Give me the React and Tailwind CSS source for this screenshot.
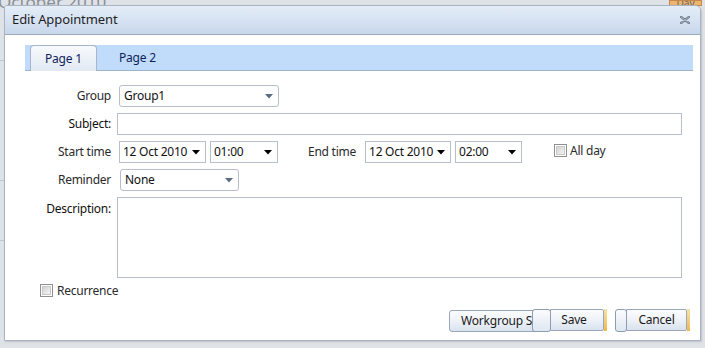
import React from "react";

const font = { fontFamily: '"Noto Sans", "Open Sans", sans-serif' };

function Arrow({ color = "#000" }) {
  return (
    <svg width="8" height="5" viewBox="0 0 8 5" className="shrink-0">
      <path d="M0 0 L8 0 L4 4.5 Z" fill={color} />
    </svg>
  );
}

function Checkbox() {
  return (
    <div className="w-[13px] h-[13px] border border-[#8f8f8f] bg-white p-[1px] shrink-0">
      <div className="w-full h-full bg-gradient-to-br from-[#d3d3d3] to-[#f4f4f4] border border-[#c8c8c8]" />
    </div>
  );
}

function Label({ children, dark }) {
  return (
    <div className={`w-[86px] shrink-0 text-right text-[12px] tracking-[-0.25px] leading-[16px] ${dark ? "text-[#111]" : "text-[#2a2a2a]"}`}>
      {children}
    </div>
  );
}

function DateSelect({ value, w, arrowColor = "#000", rounded = false, left = 3 }) {
  return (
    <div
      className={`h-[22px] border border-[#b6bfcb] bg-white flex items-center justify-between pr-[5px] text-[12px] tracking-[-0.25px] leading-[16px] text-[#111] ${rounded ? "rounded-[3px]" : ""}`}
      style={{ width: w, paddingLeft: left }}
    >
      <span>{value}</span>
      <Arrow color={arrowColor} />
    </div>
  );
}

export default function App() {
  return (
    <div className="w-[705px] h-[348px] relative overflow-hidden bg-[#dfe3e8]" style={font}>
      {/* background calendar */}
      <div className="absolute left-[-2px] top-[-11px] text-[17px] text-[#8a8f96]">October 2010</div>
      <div className="absolute left-[669px] top-0 w-[33px] h-[6px] bg-[#f0b46e] border border-[#c4894a] text-[10px] leading-[4px] text-center text-[#666] overflow-hidden">Day</div>
      <div className="absolute left-0 top-[60px] w-[4px] h-px bg-[#c3c8cf]" />
      <div className="absolute left-0 top-[180px] w-[4px] h-px bg-[#c3c8cf]" />
      <div className="absolute left-0 top-[240px] w-[4px] h-px bg-[#c3c8cf]" />

      {/* dialog */}
      <div className="absolute left-[4px] top-[5px] w-[697px] h-[336px] bg-white border border-[#a9b4c2] rounded-tr-[6px] rounded-tl-[3px] flex flex-col overflow-hidden shadow-[1px_1px_2px_rgba(0,0,0,0.15)]">
        {/* title bar */}
        <div className="h-[29px] shrink-0 bg-gradient-to-b from-[#e4edf8] via-[#d7e3f3] to-[#c8d7eb] border-b border-[#98a9c0] flex items-center justify-between pl-[7px] pr-[10px]">
          <span className="text-[13px] tracking-[-0.1px] text-[#1e1e1e]">Edit Appointment</span>
          <svg width="10" height="8" viewBox="0 0 10 8">
            <path d="M1 0.8 L9 7.2 M9 0.8 L1 7.2" stroke="#6f7a8a" strokeWidth="2.3" strokeLinecap="round" />
            <path d="M1 0.8 L9 7.2 M9 0.8 L1 7.2" stroke="#c5ccd6" strokeWidth="0.7" strokeLinecap="round" />
          </svg>
        </div>

        <div className="flex-1 flex flex-col pl-[20px] pr-[8px] pt-[10px]">
          {/* tabs */}
          <div className="h-[26px] w-[668px] bg-[#c1dcfa] border-b border-[#9fb4cc] flex items-end pl-[5px]">
            <div className="h-[26px] w-[67px] -mb-px bg-gradient-to-b from-[#f7f9fc] to-[#e1e9f4] border border-[#a6b5c9] border-b-0 rounded-t-[4px] flex items-center justify-center text-[12px] tracking-[-0.2px] text-[#0e1e5a]">
              Page 1
            </div>
            <div className="h-[25px] ml-[22px] flex items-center text-[12px] tracking-[-0.2px] text-[#0e1e5a]">Page 2</div>
          </div>

          {/* form */}
          <div className="flex flex-col mt-[14px] gap-[6px]">
            <div className="flex items-center h-[22px]">
              <Label>Group</Label>
              <div className="ml-[8px]">
                <DateSelect value="Group1" w={160} arrowColor="#5b6b84" rounded left={4} />
              </div>
            </div>
            <div className="flex items-center h-[22px]">
              <Label dark>Subject:</Label>
              <div className="ml-[6px] w-[565px] h-[22px] border border-[#b6bfcb] bg-white" />
            </div>
            <div className="flex items-center h-[22px]">
              <Label>Start time</Label>
              <div className="ml-[8px] flex gap-[4px]">
                <DateSelect value="12 Oct 2010" w={87} />
                <DateSelect value="01:00" w={68} />
              </div>
              <div className="ml-[30px] text-[12px] tracking-[-0.25px] leading-[16px] text-[#2a2a2a]">End time</div>
              <div className="ml-[9px] flex gap-[4px]">
                <DateSelect value="12 Oct 2010" w={86} />
                <DateSelect value="02:00" w={67} />
              </div>
              <div className="ml-[32px] flex items-center gap-[3px] -mt-[3px]">
                <Checkbox />
                <span className="text-[12px] tracking-[-0.25px] leading-[16px] text-[#2a2a2a]">All day</span>
              </div>
            </div>
            <div className="flex items-center h-[22px]">
              <Label>Reminder</Label>
              <div className="ml-[9px]">
                <DateSelect value="None" w={119} arrowColor="#5b6b84" rounded left={4} />
              </div>
            </div>
            <div className="flex items-start h-[81px]">
              <div className="pt-[4px]">
                <Label dark>Description:</Label>
              </div>
              <div className="ml-[6px] w-[565px] h-[81px] border border-[#b6bfcb] bg-white" />
            </div>
            <div className="flex items-center gap-[4px] pl-[15px] h-[13px]">
              <Checkbox />
              <span className="text-[12px] tracking-[-0.25px] leading-[16px] text-[#2a2a2a]">Recurrence</span>
            </div>
          </div>

          {/* buttons */}
          <div className="flex justify-end items-center mt-[12px] pr-[2px]">
            <div className="h-[22px] w-[93px] rounded-[3px] border border-[#9aa7ba] bg-gradient-to-b from-[#fbfcfe] via-[#eef2f8] to-[#d9e2ee] text-[12px] tracking-[-0.2px] text-[#1a1a1a] pl-[11px] flex items-center overflow-hidden whitespace-nowrap">
              Workgroup Settings
            </div>
            <div className="relative -ml-[10px] h-[23px] w-[75px] flex">
              <div className="w-[19px] h-[23px] rounded-[3px] border border-[#8e9bb0] bg-gradient-to-b from-[#fbfcfe] to-[#dfe7f1] z-10" />
              <div className="flex-1 h-[22px] -ml-px border border-[#9aa7ba] rounded-r-[2px] bg-gradient-to-b from-[#fbfcfe] via-[#eef2f8] to-[#d9e2ee] flex items-center justify-center text-[12px] tracking-[-0.2px] text-[#1a1a1a] pr-[6px]">
                Save
              </div>
              <div className="w-[3px] h-[22px] bg-gradient-to-b from-[#f8e3a5] to-[#f0b84a]" />
            </div>
            <div className="relative ml-[8px] h-[23px] w-[75px] flex">
              <div className="w-[12px] h-[23px] rounded-[3px] border border-[#8e9bb0] bg-gradient-to-b from-[#fbfcfe] to-[#dfe7f1] z-10" />
              <div className="flex-1 h-[22px] -ml-px border border-[#9aa7ba] rounded-r-[2px] bg-gradient-to-b from-[#fbfcfe] via-[#eef2f8] to-[#d9e2ee] flex items-center justify-center text-[12px] tracking-[-0.2px] text-[#1a1a1a]">
                Cancel
              </div>
              <div className="w-[3px] h-[22px] bg-gradient-to-b from-[#f8e3a5] to-[#f0b84a]" />
            </div>
          </div>
        </div>
      </div>
    </div>
  );
}
